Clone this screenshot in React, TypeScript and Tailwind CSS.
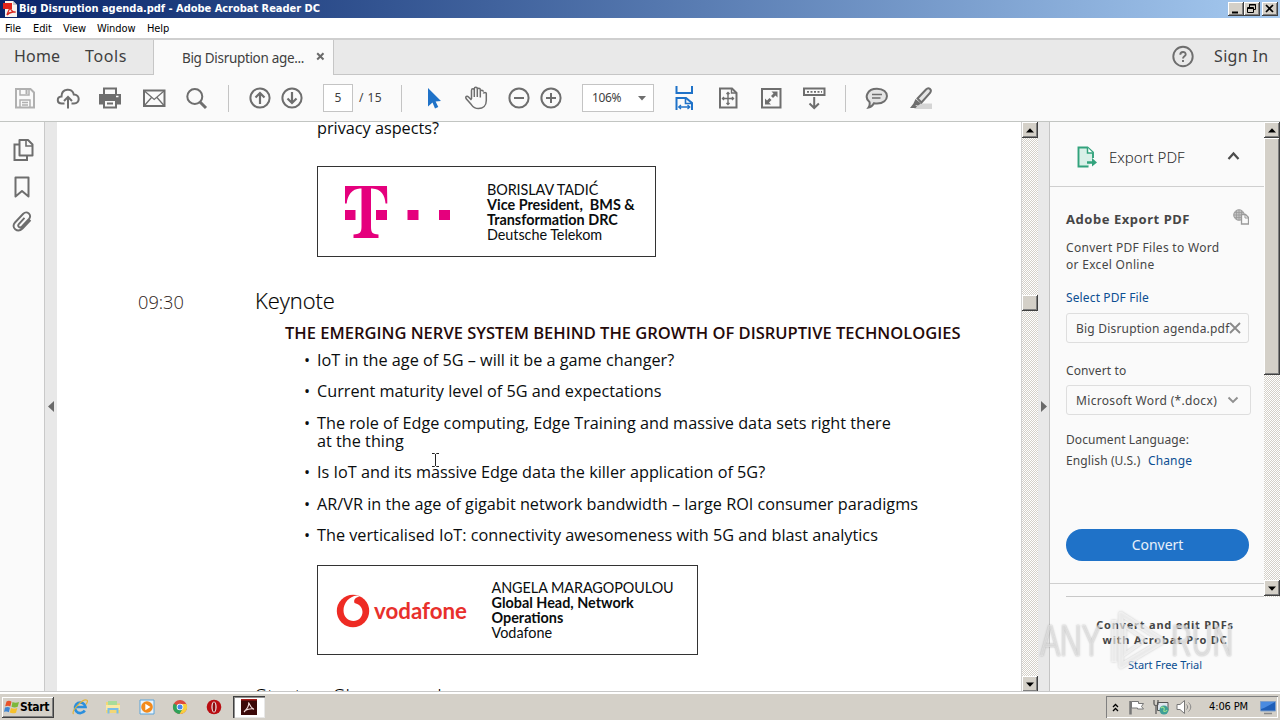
import React from "react";

const UI = "font-['Noto_Sans','Open_Sans',sans-serif]";
const TAHOMA = "font-['DejaVu_Sans_Condensed','DejaVu_Sans',sans-serif] [font-stretch:condensed]";
const DITHER = "bg-[#e9e7e3] bg-[conic-gradient(#d4d0c8_25%,#fff_0_50%,#d4d0c8_0_75%,#fff_0)] bg-[length:2px_2px]";
const RAISED = "bg-[#d4d0c8] shadow-[inset_-1px_-1px_0_#404040,inset_1px_1px_0_#fff,inset_-2px_-2px_0_#808080]";

function Icon({ className = "", children }: { className?: string; children: React.ReactNode }) {
  return (
    <svg viewBox="0 0 24 24" className={`h-6 w-6 shrink-0 ${className}`} fill="none" stroke="#6e6e6e" strokeWidth="2">
      {children}
    </svg>
  );
}

function Divider({ className = "" }: { className?: string }) {
  return <div className={`h-[27px] w-px shrink-0 bg-[#c4c4c4] ${className}`} />;
}

function TitleBar() {
  const btn = `flex h-[14px] w-4 items-center justify-center ${RAISED}`;
  return (
    <div className={`flex h-[18px] shrink-0 items-center bg-linear-to-r from-[#0a246a] to-[#a6caf0] text-white ${TAHOMA}`}>
      <svg viewBox="0 0 16 16" className="ml-[2px] h-4 w-4">
        <path d="M3 0h8l4 4v12H3z" fill="#f6f3f0" />
        <path d="M11 0l4 4h-4z" fill="#c9c9c9" />
        <path d="M1 2h9v6H1z" fill="#e2231a" />
        <path d="M5 14c1-4 3-6 3-8s-1-1 0 1 3 4 5 4-5-1-8 3z" fill="none" stroke="#d9281e" strokeWidth="1.3" />
      </svg>
      <span className="ml-px whitespace-nowrap text-[11px] font-bold leading-[18px] tracking-[-0.03px]">Big Disruption agenda.pdf - Adobe Acrobat Reader DC</span>
      <div className="ml-auto mr-[2px] flex">
        <div className={btn}><svg viewBox="0 0 16 14" className="h-[14px] w-4"><path d="M4 9.500h6v2H4z" fill="#000" /></svg></div>
        <div className={btn}>
          <svg viewBox="0 0 16 14" className="h-[14px] w-4" fill="none" stroke="#000"><path d="M5.500 5V2.500h6v5H10M5 3h7M3.500 5.500h6v5h-6zM3 6.500h7" /></svg>
        </div>
        <div className={`ml-[2px] ${btn}`}><svg viewBox="0 0 16 14" className="h-[14px] w-4"><path d="M4 3l7 7M11 3l-7 7" stroke="#000" strokeWidth="1.700" /></svg></div>
      </div>
    </div>
  );
}

function MenuBar() {
  return (
    <div className={`flex h-5 shrink-0 items-center bg-white pl-[5px] text-[11px] leading-5 tracking-[-0.1px] text-black ${TAHOMA}`}>
      <div className="flex pt-px">
        <span className="w-7">File</span>
        <span className="w-[30px]">Edit</span>
        <span className="w-[34px]">View</span>
        <span className="w-[50px] tracking-[-0.1px]">Window</span>
        <span>Help</span>
      </div>
    </div>
  );
}

function TabBar() {
  return (
    <div className={`flex h-[37px] shrink-0 border-t-2 border-[#cfcfcf] bg-[#e9e9e9] text-[#3f3f3f] ${UI}`}>
      <div className="flex w-[154px] border-b border-r border-[#c6c6c6] pl-[14px] text-base leading-[32px]">
        <span className="w-[71px] tracking-[0.2px]">Home</span>
        <span className="tracking-[0.6px]">Tools</span>
      </div>
      <div className="flex w-[180px] items-center border-r border-[#c6c6c6] bg-[#fafafa] pl-[28px]">
        <span className="w-[134px] whitespace-nowrap text-[13.500px] leading-[32px] tracking-[-0.32px]">Big Disruption age...</span>
        <svg viewBox="0 0 9 9" className="h-[9px] w-[9px] -translate-y-px"><path d="M1.200 1.200l6.300 6.300M7.500 1.200l-6.300 6.300" stroke="#6a6a6a" strokeWidth="2" /></svg>
      </div>
      <div className="flex flex-1 items-start justify-end border-b border-[#c6c6c6]">
        <svg viewBox="0 0 24 24" className="mt-1 h-6 w-6" fill="none" stroke="#6e6e6e" strokeWidth="1.900">
          <circle cx="12" cy="12.500" r="9.700" />
          <path d="M9.300 10.700c0-3.600 5.400-3.600 5.400-.3 0 1.900-2.700 1.900-2.700 4" />
          <path d="M12 16v2" />
        </svg>
        <span className="ml-[19px] w-[66px] text-base leading-[32px] tracking-[0.35px]">Sign In</span>
      </div>
    </div>
  );
}

function Toolbar() {
  return (
    <div className={`flex h-[47px] shrink-0 items-center border-b border-[#c2c5c2] bg-[#fafafa] pl-[13px] text-[12px] text-[#3f3f3f] ${UI}`}>
      <Icon>
        <g stroke="#b0b0b0"><path d="M3 3h14.500l3.500 3.500V21.500H3z" /><path d="M7 3v6h9V3M7 21v-7h10v7M9 16.500h6M9 19h6" strokeWidth="1.500" /><path d="M13.500 4v4" /></g>
      </Icon>
      <Icon className="ml-[19px]">
        <path d="M8.500 17.500H5.800C.500 17.500.500 10.800 5.500 10.500 5.500 2 16.500 1.500 17.800 8.500c6.500 0 6.500 9 .2 9h-2.500" />
        <path d="M12 22.500v-11M8 15l4-4 4 4" />
      </Icon>
      <Icon className="ml-[18px]">
        <path d="M6 8V2.500h12V8" />
        <path d="M1 8h22v10.500h-4V14H5v4.500H1z" fill="#6e6e6e" stroke="none" />
        <path d="M6 14h12v7.500H6zM9 17.500h6" />
        <path d="M18 10.500h2.500" stroke="#fff" strokeWidth="1.500" />
      </Icon>
      <Icon className="ml-5">
        <path d="M2 4.500h20.500v15.500H2z" /><path d="M2.500 5l9.700 8.500L22 5M2.500 19.500l7-8M22 19.500l-7-8" strokeWidth="1.300" />
      </Icon>
      <Icon className="ml-[18px]"><circle cx="10.800" cy="10.500" r="7.500" /><path d="M16 16l6 6" strokeWidth="3" /></Icon>
      <Divider className="ml-5" />
      <Icon className="ml-[19px]"><circle cx="12" cy="12" r="9.600" /><path d="M12 18V7.500M7.500 11.500L12 7l4.500 4.500" strokeWidth="2.200" /></Icon>
      <Icon className="ml-2"><circle cx="12" cy="12" r="9.600" /><path d="M12 6v10.500M7.500 12.500L12 17l4.500-4.500" strokeWidth="2.200" /></Icon>
      <div className="ml-[19px] h-7 w-[30px] border border-[#c4c4c4] bg-white text-center leading-[26px]">5</div>
      <span className="ml-[6px] w-6 whitespace-nowrap tracking-[0.4px]">/ 15</span>
      <Divider className="ml-[18px]" />
      <Icon className="ml-[19px]"><path d="M7 2v18.500l4.500-4 2.500 6 3.300-1.500-2.700-5.500 5.400-.5z" fill="#1f72c8" stroke="none" /></Icon>
      <Icon className="ml-[19px]">
        <path d="M7.500 13V4.500c0-2.200 2.800-2.200 2.800 0V11M10.300 10V2.800c0-2 3-2 3 0V11M13.300 10V3.800c0-2 3-2 3 0v7.700M16.300 9V5.800c0-2 2.900-2 3 0M19.300 7.500c.5-1.500 3-1.500 3 0v7c0 5-3.300 8-7.800 8-4 0-5.500-1.500-7-3.700L2 12.500c-1-1.800 1-3 2.500-1.500l3 3" strokeWidth="1.500" />
      </Icon>
      <Icon className="ml-[19px]"><circle cx="12" cy="12" r="9.600" /><path d="M7 12h10" /></Icon>
      <Icon className="ml-2"><circle cx="12" cy="12" r="9.600" /><path d="M7 12h10M12 7v10" /></Icon>
      <div className="ml-[19px] flex h-7 w-[72px] items-center justify-between border border-[#c4c4c4] bg-white pl-[9px] pr-[7px]">
        <span className="tracking-[-0.4px]">106%</span>
        <svg viewBox="0 0 8 5" className="h-[5px] w-2"><path d="M0 0h8L4 4.500z" fill="#6e6e6e" /></svg>
      </div>
      <Icon className="ml-[18px]">
        <g stroke="#1f72c8"><path d="M4.500 0v7h15.500V0M4.500 24V12h9.500l6 5v7" /><path d="M13.500 12v5.500H20" strokeWidth="1.600" /><path d="M7 21h10.500M9 19l-2.300 2L9 23M15.500 19l2.300 2-2.300 2" strokeWidth="1.300" /></g>
      </Icon>
      <Icon className="ml-5">
        <path d="M4 2.500h12l4.500 4.500v14.500H4z" /><path d="M15.500 2.500V7h5" strokeWidth="1.400" />
        <path d="M12 6.500v12M6.500 12.500h11M10.500 8L12 6.500 13.500 8M10.500 17l1.500 1.500 1.500-1.500M8 11l-1.500 1.500L8 14M16 11l1.500 1.500L16 14" strokeWidth="1.400" />
      </Icon>
      <Icon className="ml-[19px]">
        <path d="M3 3h18.500v18.500H3z" /><path d="M18.500 5.500v6l-2-2-2.500 2.500-2-2 2.500-2.500-2-2zM6 18.500v-6l2 2 2.500-2.500 2 2L10 16.500l2 2z" fill="#6e6e6e" stroke="none" />
      </Icon>
      <Icon className="ml-[19px]">
        <path d="M2 2.500h20.500v6.500H2z" /><path d="M5 5.800h15" strokeDasharray="2 1.500" strokeWidth="1.800" /><path d="M12.200 11v11M7.500 17.500l4.700 4.500 4.700-4.500" />
      </Icon>
      <Divider className="ml-[19px]" />
      <Icon className="ml-[19px]">
        <path d="M12 2.800c13.500 0 13 14.700 0 14.700-1 0-2-.1-3-.3-1 1.800-3 3.800-5.500 4.300 1-1.500 1.500-3.500 1-5.500C-1 11.500 2 2.800 12 2.800z" fill="#e4e4e4" /><path d="M7 8.500h10M7 12h8.500" strokeWidth="1.500" />
      </Icon>
      <Icon className="ml-5">
        <path d="M9 17.500h14V23H5z" fill="#d5d5d5" stroke="none" />
        <path d="M8.500 12.500L17 3.500c2.500-2.500 6.500-.5 4 3.500l-8.500 9.500z" fill="#e4e4e4" />
        <path d="M6.500 13l5.500 4.500-3 2-5-1zM4.500 17.500l3.500 3-1.500 1.500H1z" fill="#6e6e6e" stroke="none" />
      </Icon>
    </div>
  );
}

function ArrowButton({ up = false }: { up?: boolean }) {
  return (
    <div className={`flex h-4 w-4 shrink-0 items-center justify-center ${RAISED}`}>
      <svg viewBox="0 0 8 5" className="h-[5px] w-2"><path d={up ? "M0 4.500h8L4 .3z" : "M0 .5h8L4 4.700z"} fill="#000" /></svg>
    </div>
  );
}

const bullets = [
  ["IoT in the age of 5G – will it be a game changer?"],
  ["Current maturity level of 5G and expectations"],
  ["The role of Edge computing, Edge Training and massive data sets right there", "at the thing"],
  ["Is IoT and its massive Edge data the killer application of 5G?"],
  ["AR/VR in the age of gigabit network bandwidth – large ROI consumer paradigms"],
  ["The verticalised IoT: connectivity awesomeness with 5G and blast analytics"],
];

function DocumentPage() {
  return (
    <div className="min-w-0 flex-1 overflow-hidden bg-white font-['Open_Sans',sans-serif] text-[16.240px] text-[#0a0d0e]">
      <div className="-mt-[3px] ml-[260px] leading-[18px]">privacy aspects?</div>
      <div className="ml-[260px] mt-[29px] flex h-[91px] w-[339px] border border-[#333] pl-[26px] pt-[15px]">
        <svg viewBox="0 0 108 58" className="h-[58px] w-[108px]" fill="#e5007d">
          <path d="M1 4h42l.3 17.500h-1.800C41 13 37 7 28 6.500H27V45c0 6 2 7.300 7.500 7.500V56H9.500v-3.500c5.500-.2 8-1.500 8-7.500V6.500H16C8 7 3.500 13 2.700 21.500H1z" />
          <path d="M1 28h10.500v10H1zM32 28h11v10H32zM63.500 28h11v10h-11zM95 28h11v10H95z" />
        </svg>
        <div className="ml-[35px] whitespace-pre font-['Lato',sans-serif] text-[14.400px] leading-[15px]">
          <div className="tracking-[-0.08px]">BORISLAV TADIĆ</div>
          <div className="font-bold">{"Vice President,  BMS &"}</div>
          <div className="font-bold">Transformation DRC</div>
          <div className="tracking-[-0.05px]">Deutsche Telekom</div>
        </div>
      </div>
      <div className="mt-[29px] flex items-baseline font-light leading-[30px]">
        <span className="ml-[81px] w-[117px] text-[18.200px] text-[#2c1a16]">09:30</span>
        <span className="text-[21.900px] text-black [-webkit-text-stroke:0.2px_#000]">Keynote</span>
      </div>
      <div className="ml-[228px] mt-[6px] whitespace-nowrap text-[16.520px] font-semibold leading-5 text-[#240a0a]">
        THE EMERGING NERVE SYSTEM BEHIND THE GROWTH OF DISRUPTIVE TECHNOLOGIES
      </div>
      <ul className="ml-[247px] mt-[8.700px] flex flex-col gap-[13.900px] leading-[17.700px]">
        {bullets.map((lines) => (
          <li key={lines[0]} className="flex whitespace-nowrap">
            <span className="w-[13px]">•</span>
            <div>{lines.map((l) => <div key={l}>{l}</div>)}</div>
          </li>
        ))}
      </ul>
      <div className="ml-[260px] mt-[20.300px] flex h-[90px] w-[381px] border border-[#333] pl-[18px] pt-[14px]">
        <div className="-mt-[13px] flex items-center">
          <svg viewBox="0 0 34 34" className="h-[34px] w-[34px]">
            <circle cx="17" cy="17" r="16.200" fill="#ee2b24" />
            <path d="M24 2.300C19 3.500 17.500 6 18.500 9c6 1.500 8 5.500 8 9 0 5-4 9-9 9s-10-4-10-10.500C7.500 9 13 2.500 21 1.500z" fill="#fff" />
          </svg>
          <span className="ml-[4px] w-[115px] font-['Lato',sans-serif] text-[22.300px] font-bold leading-[30px] text-[#e8302c]">vodafone</span>
        </div>
        <div className="ml-[2.500px] whitespace-nowrap font-['Lato',sans-serif] text-[14.400px] leading-[15px]">
          <div className="tracking-[-0.06px]">ANGELA MARAGOPOULOU</div>
          <div className="font-bold">Global Head, Network</div>
          <div className="font-bold">Operations</div>
          <div>Vodafone</div>
        </div>
      </div>
      <div className="ml-[198px] mt-[27px] text-[21.900px] font-light leading-[30px] text-black">Startup Showcase I</div>
    </div>
  );
}

function ExportPanel() {
  return (
    <div className={`flex w-[230px] shrink-0 flex-col bg-[#fafafa] text-[12px] text-[#464646] ${UI}`}>
      <div className="flex h-[475px] shrink-0">
        <div className="flex w-[214px] flex-col">
          <div className="flex h-[65px] items-center border-b border-[#cfcfcf] pl-[26px] pt-[6px]">
            <svg viewBox="0 0 22 22" className="h-[22px] w-[22px]" fill="none" stroke="#32a27c" strokeWidth="1.900">
              <path d="M12.500 20.500H2.500V1.500h9l5.500 5V12" fill="#d9f0e8" /><path d="M11.500 1.500v5.500h5.500" fill="#fff" strokeWidth="1.500" /><path d="M11 16.500h7" strokeWidth="2.500" /><path d="M16 12l5 4.500-5 4z" fill="#32a27c" stroke="none" />
            </svg>
            <span className="ml-[11px] w-[118px] text-[15px] font-light leading-5 text-[#2c2c2c]">Export PDF</span>
            <svg viewBox="0 0 13 9" className="h-[9px] w-[13px] -translate-y-0.5"><path d="M1.500 8l5-5.500 5 5.500" fill="none" stroke="#4c4c4c" strokeWidth="2.200" /></svg>
          </div>
          <div className="flex flex-1 flex-col whitespace-nowrap pl-4 leading-[17px]">
            <div className="mt-[24px] flex h-[17px] w-[183px] justify-between">
              <span className="text-[13px] font-bold tracking-[0.540px]">Adobe Export PDF</span>
              <svg viewBox="0 0 16 16" className="-mt-0.5 h-4 w-4" fill="none" stroke="#9a9a9a">
                <circle cx="6" cy="6" r="5.300" fill="#c4c4c4" /><path d="M1 6h10M6 1v10M2 3.500h8M2 8.500h8M3.500 2v8M8.500 2v8" strokeWidth=".8" /><path d="M8.500 5.500h4L15.500 8.500v6.500h-7z" fill="#fafafa" strokeWidth="1.300" /><path d="M12 5.500V9h3" />
              </svg>
            </div>
            <div className="mt-[11px] tracking-[0.300px]">Convert PDF Files to Word<br />or Excel Online</div>
            <div className="mt-4 tracking-[0.130px] text-[#0c4f92]">Select PDF File</div>
            <div className="mt-[7px] flex h-[30px] w-[183px] items-center rounded-[3px] border border-[#dedede] pl-[9px]">
              <span className="w-[153px] tracking-[0.200px]">Big Disruption agenda.pdf</span>
              <svg viewBox="0 0 12 12" className="h-3 w-3"><path d="M1 1l10 10M11 1L1 11" stroke="#8a8a8a" strokeWidth="1.800" /></svg>
            </div>
            <div className="mt-[19px] tracking-[0.120px]">Convert to</div>
            <div className="mt-[6px] flex h-[30px] w-[185px] items-center justify-between rounded-[3px] border border-[#dedede] pl-[9px] pr-[11px]">
              <span className="pt-px tracking-[0.330px]">Microsoft Word (*.docx)</span>
              <svg viewBox="0 0 12 8" className="h-2 w-3"><path d="M1.500 1.500L6 6l4.500-4.500" fill="none" stroke="#909090" strokeWidth="1.900" /></svg>
            </div>
            <div className="mt-4 tracking-[0.090px]">Document Language:</div>
            <div className="mt-1 flex tracking-[0.120px]"><span className="w-[82px]">English (U.S.)</span><span className="text-[#0c4f92]">Change</span></div>
            <div className="mt-[60px] h-8 w-[183px] rounded-full bg-[#1f72c8] text-center text-[14px] leading-[31px] tracking-[-0.050px] text-white/90">Convert</div>
          </div>
          <div className="mb-[12px] h-px bg-[#cfcfcf]" />
          <div className="ml-4 h-px bg-[#c8c8c8]" />
        </div>
        <div className={`flex w-4 flex-col ${DITHER}`}>
          <ArrowButton up />
          <div className={`h-[237px] ${RAISED}`} />
          <div className="mb-px mt-auto"><ArrowButton /></div>
        </div>
      </div>
      <div className="pt-5 text-center">
        <div className="text-[11px] font-bold leading-[15px] tracking-[0.800px]">Convert and edit PDFs<br />with Acrobat Pro DC</div>
        <div className="mt-[9px] text-[11px] leading-[17px] tracking-[-0.050px] text-[#0c4f92]">Start Free Trial</div>
      </div>
    </div>
  );
}

function Taskbar() {
  return (
    <div className={`flex h-7 shrink-0 items-center border-t-2 border-white bg-[#d4d0c8] pl-[2px] pr-[2px] text-black shadow-[0_-1px_0_#c8c8c8] ${TAHOMA}`}>
      <div className={`flex h-[21px] w-[52px] items-center pl-[2px] ${RAISED}`}>
        <svg viewBox="0 0 16 16" className="h-4 w-4">
          <path d="M2.500 2.500c2-1 3.500-.8 5 .3L6.300 7.500C5 6.500 3.200 6.500 1.200 7.300z" fill="#e8532a" />
          <path d="M8.500 3c2 1 4 1 6.500 0l-1.300 4.800c-2 1-4.400.9-6.200-.1z" fill="#7cb83c" />
          <path d="M1 8.500c2-.9 3.600-.8 5 .2l-1.200 4.500C3.500 12.300 1.700 12.400 0 13z" fill="#3f86d2" />
          <path d="M7 9c2 1 4 1 6.300.1L12 13.700c-2.300.9-4.400.8-6.200-.2z" fill="#f6c12c" />
        </svg>
        <span className="text-[12px] font-bold leading-5 tracking-[-0.340px]">Start</span>
      </div>
      <svg viewBox="0 0 16 16" className="ml-[18px] h-4 w-4">
        <path d="M12.800 11.500A5.300 5.300 0 1 1 13.500 8H4" fill="none" stroke="#2b8fdd" strokeWidth="2.600" /><path d="M1.500 15C-1 12 11-1 15 1.200c1 .7 0 3-1 4.300" fill="none" stroke="#e3b53a" strokeWidth="1.200" />
      </svg>
      <svg viewBox="0 0 16 16" className="ml-[17px] h-4 w-4"><path d="M1 3h5l1 1.500h8V14H1z" fill="#f2d675" /><path d="M3 2h9v4H3z" fill="#a7dc9a" /><path d="M1 6h14v5H1z" fill="#fae9a4" /><path d="M3.500 14.500V10h9v4.500" fill="none" stroke="#79bde8" strokeWidth="2" /></svg>
      <svg viewBox="0 0 16 16" className="ml-[18px] h-4 w-4"><path d="M1 1h14v14H1z" fill="#e8f3fc" stroke="#5ba4da" /><circle cx="8" cy="8" r="5.800" fill="#f28a1c" /><path d="M6.300 4.800L11.500 8l-5.200 3.200z" fill="#fff" /></svg>
      <svg viewBox="0 0 16 16" className="ml-[17px] h-4 w-4"><circle cx="8" cy="8" r="7" fill="#dd4b3e" /><path d="M8 8L1.900 4.500A7 7 0 0 0 8 15l3-5.200z" fill="#2fa25a" /><path d="M8 8h0l2.800 1.600L7.500 15A7 7 0 0 0 14.400 5H8z" fill="#f8cf3e" /><circle cx="8" cy="8" r="3.300" fill="#fff" /><circle cx="8" cy="8" r="2.500" fill="#4588ec" /></svg>
      <svg viewBox="0 0 16 16" className="ml-[18px] h-4 w-4"><circle cx="8" cy="8" r="7.300" fill="#b90d12" /><ellipse cx="8" cy="8" rx="2.600" ry="5.500" fill="#eee" /><ellipse cx="8" cy="8" rx="1.400" ry="4.700" fill="#8e0a0e" /></svg>
      <div className="ml-[11px] flex h-[22px] w-8 items-center justify-center bg-white shadow-[inset_1px_1px_0_#404040,inset_2px_2px_0_#909090,inset_-1px_-1px_0_#e8e8e8]">
        <svg viewBox="0 0 16 16" className="h-4 w-4"><path d="M0 0h16v16H0z" fill="#3b0908" /><path d="M0 0h16v1.500H0z" fill="#a31a17" /><path d="M3 13C6 10 8 6 7.700 4c-.3-1.500 1 4 5.300 6.500M4 11.500c3-1.500 6-2 9-1.500" fill="none" stroke="#f3dcdc" strokeWidth="1.100" /></svg>
      </div>
      <div className="ml-auto flex h-[22px] w-[172px] items-center shadow-[inset_1px_1px_0_#808080,inset_-1px_-1px_0_#fff]">
        <svg viewBox="0 0 7 9" className="ml-[6px] h-[9px] w-[7px]"><path d="M1 4l2.500-2.500L6 4M1 8l2.500-2.500L6 8" fill="none" stroke="#000" strokeWidth="1.300" /></svg>
        <svg viewBox="0 0 16 16" className="ml-[9px] h-4 w-4"><path d="M2.500 2v13.500" stroke="#777" strokeWidth="2.500" /><path d="M3.500 2.500h7v2h5l-2 3 2 2.500h-6V9h-6z" fill="#fff" stroke="#777" /></svg>
        <svg viewBox="0 0 16 16" className="ml-[9px] h-4 w-4"><path d="M4.500 3.500h10.500v8H4.500z" fill="#dfe6ee" stroke="#555" /><path d="M1 1v4c0 2 4 2 4 0V1M3 6v9" fill="none" stroke="#555" strokeWidth="1.200" /><circle cx="11" cy="11" r="4.500" fill="#3f9f97" /><path d="M8 9c2-2 4 0 3 2s2 2 3 0" stroke="#9be08c" fill="none" strokeWidth="1.200" /></svg>
        <svg viewBox="0 0 17 16" className="ml-[7px] h-4 w-[17px]"><path d="M1 5.500h3L8.500 1.500v13L4 10.500H1z" fill="#fff" stroke="#777" /><path d="M10.500 5.500c1.500 1.500 1.500 3.500 0 5M12.500 3.500c3 2.500 3 6.500 0 9" fill="none" stroke="#888" /></svg>
        <span className="ml-[16px] whitespace-nowrap pt-px text-[11px] tracking-[-0.120px]">4:06 PM</span>
        <svg viewBox="0 0 16 16" className="ml-auto mr-[2px] h-4 w-4"><path d="M.5 2.500h15v9.500H.5z" fill="#1f5fb8" stroke="#7f9fc8" /><path d="M1 3h14L4 9l-3 1z" fill="#4a8be0" /><path d="M4 14.500h8" stroke="#888" strokeWidth="1.500" /></svg>
      </div>
    </div>
  );
}

function Watermark() {
  return (
    <div className="absolute left-[1040px] top-[608px] flex h-[66px] items-center font-['Liberation_Sans',sans-serif] text-[45px] leading-[66px] text-white/55 [text-shadow:0_0_2px_rgba(90,90,90,0.5)]">
      <span className="w-[65px] origin-left scale-x-[0.68] tracking-[-1px]">ANY</span>
      <svg viewBox="0 0 62 66" className="h-[66px] w-[66px] drop-shadow-[0_0_1px_rgba(90,90,90,0.5)]" fill="none" stroke="#fff" strokeOpacity=".6" strokeWidth="5">
        <path d="M7 12v42" /><path d="M14 6l42 27-42 25z" strokeLinejoin="round" /><path d="M18 18l20 14-20 14z" strokeWidth="3" />
      </svg>
      <span className="w-[66px] origin-left scale-x-[0.64]">RUN</span>
    </div>
  );
}

export default function App() {
  return (
    <div className="relative flex h-[720px] w-[1280px] flex-col overflow-hidden bg-white">
      <TitleBar />
      <MenuBar />
      <TabBar />
      <Toolbar />
      <div className="flex h-[570px] shrink-0 overflow-hidden">
        <div className="flex w-[45px] shrink-0 flex-col items-start border-r border-[#c9c9c9] bg-[#fafafa] pl-[11px]">
          <Icon className="mt-4">
            <path d="M8.500 2h8.500l4.500 4.500v11h-13z" strokeLinejoin="round" /><path d="M15 2v6h6" strokeWidth="1.600" /><path d="M8 6.500H3.500v15.500h12.500v-4" />
          </Icon>
          <Icon className="mt-[13px]"><path d="M4.500 2.500h13v19L11 16l-6.500 5.500z" strokeLinejoin="round" /></Icon>
          <Icon className="mt-[11px]">
            <path d="M19.500 10l-8 8.500c-5 5-12-1-7.500-6L12 4c4-4 9.500 1 6 5l-7 7.500c-2.500 2.300-5-.5-3-2.700l5.500-6" strokeWidth="1.900" />
          </Icon>
        </div>
        <div className="flex w-3 shrink-0 items-center justify-center bg-[#e8e8e8]">
          <svg viewBox="0 0 6 11" className="h-[11px] w-[6px] -translate-y-px"><path d="M6 0v11L0 5.500z" fill="#6a6a6a" /></svg>
        </div>
        <DocumentPage />
        <div className={`flex w-[17px] shrink-0 flex-col border-l border-[#d0d0d0] ${DITHER}`}>
          <ArrowButton up />
          <div className={`mt-[157px] h-4 ${RAISED}`} />
          <div className="mt-auto"><ArrowButton /></div>
        </div>
        <div className="flex w-3 shrink-0 items-center justify-center border-r border-[#c4c4c4] bg-[#e8e8e8]">
          <svg viewBox="0 0 6 11" className="h-[11px] w-[6px] -translate-y-px"><path d="M0 0v11l6-5.500z" fill="#6a6a6a" /></svg>
        </div>
        <ExportPanel />
      </div>
      <Taskbar />
      <svg viewBox="0 0 9 16" className="absolute left-[431px] top-[452px] h-4 w-[9px]"><path d="M1 1.500h2.500l1 1 1-1H8M4.500 2v12M1 14.500h2.500l1-1 1 1H8" fill="none" stroke="#222" /></svg>
      <Watermark />
    </div>
  );
}
